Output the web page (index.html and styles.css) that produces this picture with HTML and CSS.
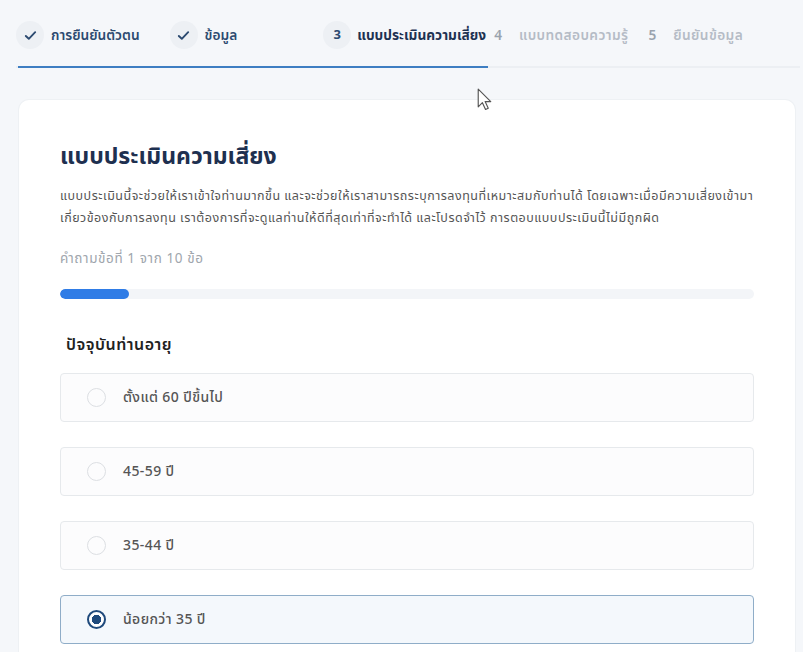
FILE: index.html
```html
<!DOCTYPE html>
<html lang="th">
<head>
  <meta charset="UTF-8">
  <meta name="viewport" content="width=device-width, initial-scale=1.0">
  <title>แบบประเมินความเสี่ยง</title>
  <link rel="stylesheet" href="styles.css">
</head>
<body>
  <nav class="steps">
    <div class="step done">
      <span class="badge">
        <svg viewBox="0 0 16 16" width="15" height="15"><path d="M3 8.5l3.2 3L13 4.5" fill="none" stroke="#2c4a70" stroke-width="2" stroke-linecap="round" stroke-linejoin="round"/></svg>
      </span>
      <span class="label">การยืนยันตัวตน</span>
    </div>
    <div class="step done">
      <span class="badge">
        <svg viewBox="0 0 16 16" width="15" height="15"><path d="M3 8.5l3.2 3L13 4.5" fill="none" stroke="#2c4a70" stroke-width="2" stroke-linecap="round" stroke-linejoin="round"/></svg>
      </span>
      <span class="label">ข้อมูล</span>
    </div>
    <div class="step active">
      <span class="badge">3</span>
      <span class="label">แบบประเมินความเสี่ยง</span>
    </div>
    <div class="step todo">
      <span class="num">4</span>
      <span class="label">แบบทดสอบความรู้</span>
    </div>
    <div class="step todo">
      <span class="num">5</span>
      <span class="label">ยืนยันข้อมูล</span>
    </div>
  </nav>

  <main class="card">
    <h1>แบบประเมินความเสี่ยง</h1>
    <p class="intro">แบบประเมินนี้จะช่วยให้เราเข้าใจท่านมากขึ้น และจะช่วยให้เราสามารถระบุการลงทุนที่เหมาะสมกับท่านได้ โดยเฉพาะเมื่อมีความเสี่ยงเข้ามาเกี่ยวข้องกับการลงทุน เราต้องการที่จะดูแลท่านให้ดีที่สุดเท่าที่จะทำได้ และโปรดจำไว้ การตอบแบบประเมินนี้ไม่มีถูกผิด</p>
    <p class="counter">คำถามข้อที่ 1 จาก 10 ข้อ</p>
    <div class="progress"><div class="bar" style="width: 10%"></div></div>

    <h2 class="question">ปัจจุบันท่านอายุ</h2>
    <div class="options">
      <label class="option"><span class="radio"></span>ตั้งแต่ 60 ปีขึ้นไป</label>
      <label class="option"><span class="radio"></span>45-59 ปี</label>
      <label class="option"><span class="radio"></span>35-44 ปี</label>
      <label class="option selected"><span class="radio"></span>น้อยกว่า 35 ปี</label>
    </div>
  </main>

  <svg class="cursor" viewBox="0 0 14 22" width="15" height="23">
    <path d="M1 1v17l4-4 3 6.5 2.6-1.2-3-6.3H13z" fill="#fff" stroke="#555" stroke-width="1.1" stroke-linejoin="round"/>
  </svg>
</body>
</html>
```

FILE: styles.css
```css
/* General */
body {
  margin: 0;
  font-family: "Noto Sans Thai", "Noto Sans", "Liberation Sans", sans-serif;
  background: #f5f7fa;
  color: #333;
}

/* Stepper */
.steps {
  display: flex;
  align-items: center;
  margin: 0 3px 0 16px;
  padding-top: 4px;
  height: 62px;
  border-bottom: 2px solid #eceff3;
  position: relative;
}

.steps::after {
  content: "";
  position: absolute;
  left: 2px;
  bottom: -2px;
  width: 470px;
  height: 2px;
  background: #3e7ec2;
}

.step {
  display: flex;
  align-items: center;
  font-size: 13.7px;
  font-weight: 600;
}

.step .badge {
  width: 28px;
  height: 28px;
  border-radius: 50%;
  background: #edf0f4;
  display: flex;
  align-items: center;
  justify-content: center;
  margin-right: 7px;
}

.step.done { color: #2c4a70; }
.step.done + .step.done { margin-left: 30px; }

.step.active { color: #1e3252; font-weight: 700; margin-left: 86px; }
.step.active .badge { font-size: 13px; color: #2c4a70; margin-right: 6px; }

.step.todo { color: #b5bcc6; margin-left: 8px; letter-spacing: 0.4px; }
.step.todo .num { margin-right: 17px; color: #9aa3ae; letter-spacing: 0; }
.step.todo + .step.todo { margin-left: 20px; }

/* Card */
.card {
  margin: 32px 8px 0 19px;
  background: #fff;
  border-radius: 10px;
  padding: 40px 41px 0;
  min-height: 600px;
  box-shadow: 0 0 0 1px #eef1f4;
}

h1 {
  margin: 0 0 12px;
  font-size: 23px;
  font-weight: 700;
  color: #1e3050;
}

.intro {
  margin: 0;
  font-size: 12.5px;
  letter-spacing: 0.5px;
  line-height: 22px;
  color: #555;
}

.counter {
  margin: 19px 0 0;
  font-size: 13.5px;
  letter-spacing: 0.6px;
  color: #a0a6ad;
}

.progress {
  margin-top: 20px;
  height: 10px;
  border-radius: 5px;
  background: #f3f5f8;
  overflow: hidden;
}

.progress .bar {
  height: 100%;
  border-radius: 5px;
  background: #2f7ce6;
}

.question {
  margin: 34px 0 16px 6px;
  font-size: 16px;
  letter-spacing: 0.5px;
  font-weight: 600;
  color: #222;
}

/* Options */
.options {
  display: flex;
  flex-direction: column;
  gap: 25px;
}

.option {
  display: flex;
  align-items: center;
  height: 47px;
  padding-left: 26px;
  border: 1px solid #e6e9ec;
  border-radius: 4px;
  background: #fcfcfd;
  font-size: 14px;
  letter-spacing: 0.4px;
  color: #555;
  font-weight: 500;
}

.radio {
  width: 19px;
  height: 19px;
  border: 1.5px solid #dcdfe3;
  border-radius: 50%;
  margin-right: 17px;
  box-sizing: border-box;
}

.option.selected {
  border-color: #8fadc8;
  background: #f4f8fc;
}

.option.selected .radio {
  border: 2.5px solid #1f4a7c;
  background: radial-gradient(circle, #1f4a7c 0 4.5px, #fff 5px);
}

.cursor {
  position: absolute;
  left: 477px;
  top: 88px;
}
```
